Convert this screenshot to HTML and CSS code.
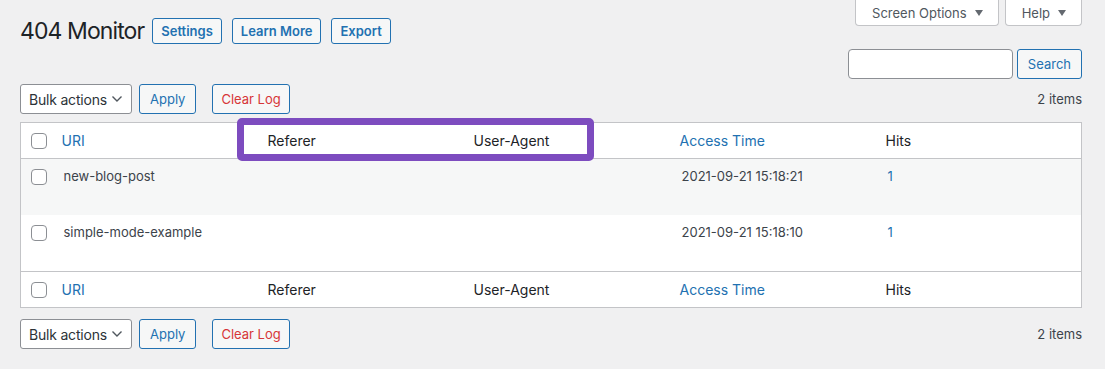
FILE: index.html
```html
<!DOCTYPE html>
<html>
<head>
  <meta charset="utf-8" />
  <meta name="viewport" content="width=device-width, initial-scale=1.0">
  <title>404 Monitor</title>
  <link rel="stylesheet" href="styles.css">
</head>
<body>

  <div class="wrap">
    <div class="page-header">
      <div class="title-group">
        <h1>404 Monitor</h1>
        <a class="title-action" href="#">Settings</a>
        <a class="title-action" href="#">Learn More</a>
        <a class="title-action" href="#">Export</a>
      </div>
      <div class="screen-meta">
        <button class="meta-tab">Screen Options <span class="caret"></span></button>
        <button class="meta-tab">Help <span class="caret"></span></button>
      </div>
    </div>

    <div class="search-box">
      <input type="search" class="search-input" />
      <button class="btn">Search</button>
    </div>

    <div class="tablenav">
      <div class="actions">
        <div class="select">
          <span>Bulk actions</span>
          <svg width="12" height="8" viewBox="0 0 12 8"><path d="M1.5 1.5 L6 6 L10.5 1.5" fill="none" stroke="#50575e" stroke-width="1.4"/></svg>
        </div>
        <button class="btn">Apply</button>
        <button class="btn btn-danger">Clear Log</button>
      </div>
      <div class="num-items">2 items</div>
    </div>

    <div class="table-wrap">
      <table class="list-table">
        <thead>
          <tr>
            <th class="check-col"><span class="checkbox"></span></th>
            <th><a href="#">URI</a></th>
            <th>Referer</th>
            <th>User-Agent</th>
            <th><a href="#">Access Time</a></th>
            <th>Hits</th>
          </tr>
        </thead>
        <tbody>
          <tr class="alt">
            <td class="check-col"><span class="checkbox"></span></td>
            <td>new-blog-post<div class="row-actions"></div></td>
            <td></td>
            <td></td>
            <td>2021-09-21 15:18:21</td>
            <td><a class="hits" href="#">1</a></td>
          </tr>
          <tr>
            <td class="check-col"><span class="checkbox"></span></td>
            <td>simple-mode-example<div class="row-actions"></div></td>
            <td></td>
            <td></td>
            <td>2021-09-21 15:18:10</td>
            <td><a class="hits" href="#">1</a></td>
          </tr>
        </tbody>
        <tfoot>
          <tr>
            <th class="check-col"><span class="checkbox"></span></th>
            <th><a href="#">URI</a></th>
            <th>Referer</th>
            <th>User-Agent</th>
            <th><a href="#">Access Time</a></th>
            <th>Hits</th>
          </tr>
        </tfoot>
      </table>
      <!-- highlight drawn over the Referer / User-Agent headers -->
      <div class="highlight"></div>
    </div>

    <div class="tablenav tablenav-bottom">
      <div class="actions">
        <div class="select">
          <span>Bulk actions</span>
          <svg width="12" height="8" viewBox="0 0 12 8"><path d="M1.5 1.5 L6 6 L10.5 1.5" fill="none" stroke="#50575e" stroke-width="1.4"/></svg>
        </div>
        <button class="btn">Apply</button>
        <button class="btn btn-danger">Clear Log</button>
      </div>
      <div class="num-items">2 items</div>
    </div>
  </div>

</body>
</html>
```

FILE: styles.css
```css
/* --- General Setup --- */
:root {
  --bg-color: #f0f0f1;
  --link: #2271b1;
  --text: #3c434a;
  --heading: #1d2327;
  --border: #c3c4c7;
  --input-border: #8c8f94;
  --danger: #d63638;
  --accent: #7d4cbf;
}
*, *::before, *::after {
  box-sizing: border-box;
}
body {
  margin: 0;
  background: var(--bg-color);
  color: var(--text);
  font-family: Inter, "Noto Sans", sans-serif;
  font-size: 13px;
}
a {
  color: var(--link);
  text-decoration: none;
}
.wrap {
  padding: 0 23px 0 20px;
}

/* --- Header --- */
.page-header {
  display: flex;
  justify-content: space-between;
  align-items: flex-start;
  height: 43px;
}
.title-group {
  display: flex;
  align-items: center;
  gap: 10px;
  padding-top: 18px;
}
h1 {
  margin: 0 -2px 0 0;
  font-size: 23px;
  font-weight: 400;
  letter-spacing: -0.9px;
  color: var(--heading);
  line-height: 25px;
}
.title-action {
  display: inline-block;
  height: 26px;
  line-height: 24px;
  padding: 0 8px;
  border: 1px solid var(--link);
  border-radius: 3px;
  background: #f6f7f7;
  font-size: 13px;
  font-weight: 600;
}
.screen-meta {
  display: flex;
  gap: 6px;
}
.meta-tab {
  height: 26px;
  padding: 0 15px 0 16px;
  border: 1px solid var(--border);
  border-top: none;
  border-radius: 0 0 4px 4px;
  background: #fff;
  color: #50575e;
  font-family: inherit;
  font-size: 13px;
  display: flex;
  align-items: center;
  gap: 8px;
}
.caret {
  width: 0;
  height: 0;
  border-left: 4px solid transparent;
  border-right: 4px solid transparent;
  border-top: 6px solid #646970;
}

/* --- Search --- */
.search-box {
  display: flex;
  justify-content: flex-end;
  gap: 4px;
  margin-top: 6px;
}
.search-input {
  width: 165px;
  height: 30px;
  border: 1px solid var(--input-border);
  border-radius: 4px;
  background: #fff;
}

/* --- Buttons & Select --- */
.btn {
  height: 30px;
  padding: 0 10px;
  border: 1px solid var(--link);
  border-radius: 3px;
  background: #f6f7f7;
  color: var(--link);
  font-family: inherit;
  font-size: 13px;
}
.btn-danger {
  color: var(--danger);
  margin-left: 9px;
  padding: 0 8px;
}
.select {
  width: 112px;
  height: 30px;
  display: flex;
  align-items: center;
  justify-content: space-between;
  padding: 0 8px 0 8px;
  border: 1px solid var(--input-border);
  border-radius: 3px;
  background: #fff;
  color: #2c3338;
  font-size: 14px;
  white-space: nowrap;
  letter-spacing: -0.2px;
}

/* --- Tablenav --- */
.tablenav {
  display: flex;
  justify-content: space-between;
  align-items: center;
  margin-top: 5px;
}
.tablenav-bottom {
  margin-top: 11px;
}
.actions {
  display: flex;
  align-items: center;
  gap: 7px;
}
.num-items {
  font-size: 13px;
  color: var(--text);
}

/* --- Table --- */
.table-wrap {
  position: relative;
  margin-top: 8px;
}
.list-table {
  width: 100%;
  border-collapse: collapse;
  table-layout: fixed;
  background: #fff;
  border: 1px solid var(--border);
}
.list-table th {
  text-align: left;
  font-weight: 400;
  font-size: 14px;
  color: var(--heading);
  padding: 8px 10px;
  line-height: 19px;
  height: 35px;
}
.list-table thead tr {
  border-bottom: 1px solid var(--border);
}
.list-table tfoot tr {
  border-top: 1px solid var(--border);
}
.list-table td {
  vertical-align: top;
  padding: 8px 10px 8px 12px;
  line-height: 19px;
  font-size: 13px;
  color: var(--text);
}
.list-table td a.hits {
  color: var(--link);
}
.list-table tr.alt td {
  background: #f6f7f7;
}
.row-actions {
  height: 21px;
}
.list-table .check-col {
  width: 31px;
  padding: 0 0 0 10px;
}
.list-table td.check-col {
  padding-top: 10px;
}
.list-table th.check-col {
  vertical-align: middle;
}
.checkbox {
  display: block;
  width: 16px;
  height: 16px;
  border: 1px solid var(--input-border);
  border-radius: 4px;
  background: #fff;
}

/* --- Highlight overlay --- */
.highlight {
  position: absolute;
  left: 217px;
  top: -4px;
  width: 357px;
  height: 43px;
  border: 7px solid var(--accent);
  border-radius: 5px;
}
```
